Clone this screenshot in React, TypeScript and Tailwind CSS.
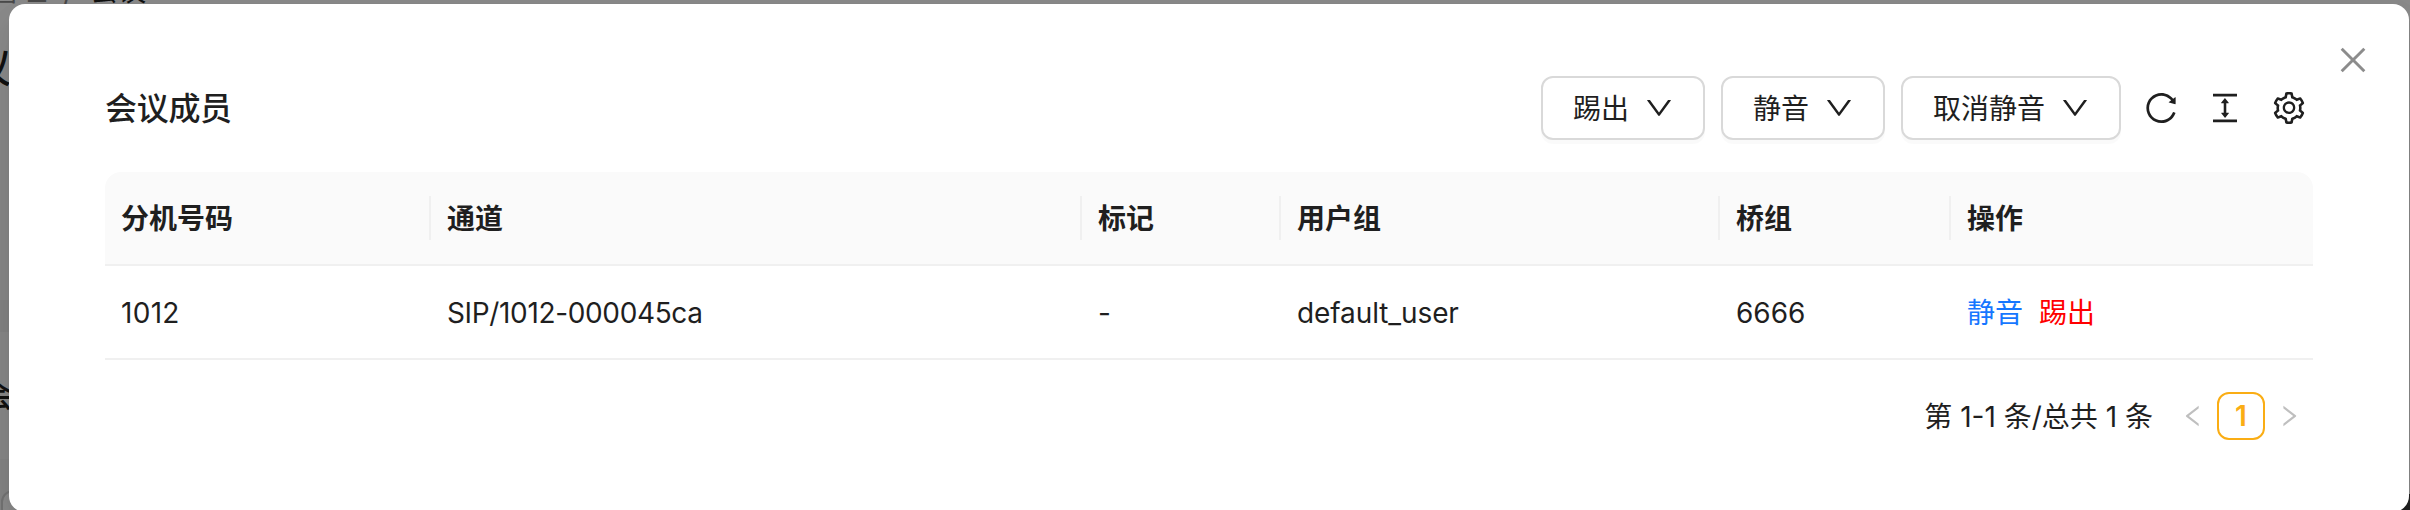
import { AiOutlineClose, AiOutlineColumnHeight, AiOutlineDown, AiOutlineLeft, AiOutlineReload, AiOutlineRight, AiOutlineSetting } from 'react-icons/ai';

const columns = ['分机号码', '通道', '标记', '用户组', '桥组', '操作'];
const actions = ['踢出', '静音', '取消静音'];
const BOX = '64 64 896 896';

export default function App() {
  return (
    <div className="relative h-[510px] w-[2410px] overflow-hidden bg-[#8c8c8c] font-['Inter','Noto_Sans_CJK_SC',sans-serif] text-[28px] leading-[44px] text-[#1f1f1f]">
      <div className="absolute left-0 top-[140px] h-[370px] w-10 bg-[#898989]" />
      <div className="absolute left-0 top-[300px] h-8 w-10 bg-[#848484]" />
      <div className="absolute left-0 top-[459px] h-[51px] w-10 bg-[#868686]" />
      <div className="absolute left-px top-[490px] size-16 rounded-xl border-2 border-[#757575] bg-[#8c8c8c]" />
      <div className="absolute right-0 top-[494px] h-4 w-8 bg-[#222]" />
      <div className="absolute left-[-9px] top-[-23px] flex leading-[28px] text-[#111]">
        <span className="text-[#4a4a4a]">管理</span>
        <span className="w-[43px] text-center text-[#4a4a4a]">/</span>
        <span>会议</span>
      </div>
      <div className="absolute left-[-29px] top-[46px] text-[40px] font-medium text-[#111]">议</div>
      <div className="absolute left-[-19px] top-[374px] text-[32px] font-medium text-[#111]">会</div>
      <main className="relative ml-[9px] mt-[4px] h-[508px] w-[2400px] rounded-2xl bg-white px-24 pt-[72px] shadow-[0_12px_32px_0_rgba(0,0,0,0.08),0_6px_12px_-8px_rgba(0,0,0,0.12),0_18px_56px_16px_rgba(0,0,0,0.05)]">
        <button className="absolute right-10 top-10 text-[#8c8c8c]"><AiOutlineClose size={32} viewBox={BOX} /></button>
        <header className="flex h-16 items-center justify-between">
          <h1 className="pt-0.5 text-[32px] font-medium tracking-[-0.3px]">会议成员</h1>
          <div className="flex items-center pr-2">
            <div className="flex gap-4">
              {actions.map((a) => (
                <button key={a} className="flex h-16 items-center gap-4 rounded-xl border-2 border-[#d9d9d9] bg-white px-[30px] shadow-[0_4px_0_rgba(0,0,0,0.02)]">
                  <span className="pt-0.5">{a}</span>
                  <AiOutlineDown size={28} viewBox={BOX} />
                </button>
              ))}
            </div>
            <div className="ml-6 flex gap-8">
              <AiOutlineReload size={32} viewBox={BOX} />
              <AiOutlineColumnHeight size={32} viewBox={BOX} />
              <AiOutlineSetting size={32} viewBox={BOX} />
            </div>
          </div>
        </header>
        <section className="mt-8">
          <div className="grid h-[94px] grid-cols-[326px_651px_199px_439px_231px_362px] items-center rounded-t-2xl border-b-2 border-[#f0f0f0] bg-[#fafafa] font-semibold">
            {columns.map((c, i) => (
              <div key={c} className={i < 5 ? 'h-11 border-r-2 border-[#f0f0f0] pl-4 pt-px' : 'h-11 pl-4 pt-px'}>{c}</div>
            ))}
          </div>
          <div className="grid h-[94px] grid-cols-[326px_651px_199px_439px_231px_362px] items-center border-b-2 border-[#f0f0f0] pt-px">
            <div className="pl-4 tracking-[0.3px]">1012</div>
            <div className="pl-4 tracking-[-0.35px]">SIP/1012-000045ca</div>
            <div className="pl-4">-</div>
            <div className="pl-4 tracking-[-0.1px]">default_user</div>
            <div className="pl-4">6666</div>
            <div className="flex gap-4 pl-4">
              <a className="text-[#1677ff]">静音</a>
              <a className="text-[#ff0000]">踢出</a>
            </div>
          </div>
        </section>
        <footer className="mt-8 flex h-12 items-center justify-end">
          <span className="mr-4 pt-px">第 1-1 条/总共 1 条</span>
          <button className="flex size-12 items-center justify-center text-[#bfbfbf]"><AiOutlineLeft size={24} viewBox={BOX} /></button>
          <button className="flex size-12 items-center justify-center rounded-xl border-2 border-[#faad14] font-semibold text-[#faad14]">1</button>
          <button className="flex size-12 items-center justify-center text-[#bfbfbf]"><AiOutlineRight size={24} viewBox={BOX} /></button>
        </footer>
      </main>
    </div>
  );
}
